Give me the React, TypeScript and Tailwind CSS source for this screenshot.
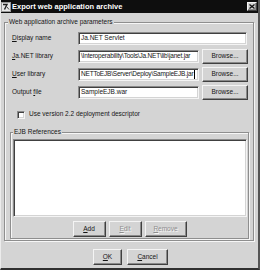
import React from "react";

const sunken =
  "border border-t-[#8a8a8a] border-l-[#8a8a8a] border-r-[#f4f4f4] border-b-[#f4f4f4] shadow-[inset_1px_1px_0_#404040,inset_-1px_-1px_0_#d4d4d4]";
const raised =
  "border border-t-[#f4f4f4] border-l-[#f4f4f4] border-r-[#404040] border-b-[#404040] shadow-[inset_-1px_-1px_0_#8a8a8a]";
const etched =
  "border border-[#8e8e8e] shadow-[1px_1px_0_#f6f6f6,inset_1px_1px_0_#f6f6f6]";

function Btn({
  w,
  h,
  children,
  disabled,
}: {
  w: string;
  h: string;
  children: React.ReactNode;
  disabled?: boolean;
}) {
  return (
    <div
      className={`${w} ${h} ${raised} bg-[#d4d4d4] flex items-center justify-center ${
        disabled ? "text-[#8e8e8e] [text-shadow:1px_1px_0_#f6f6f6]" : "text-[#141414]"
      }`}
    >
      {children}
    </div>
  );
}

function Field({
  text,
  w,
  tight,
  caret,
}: {
  text: string;
  w: string;
  tight?: boolean;
  caret?: boolean;
}) {
  return (
    <div
      className={`${w} h-[13px] ${sunken} bg-white flex items-center overflow-hidden whitespace-nowrap pl-[2px] pr-[1px] ${
        tight ? "tracking-[-0.2px] pl-[1px]" : ""
      }`}
    >
      <span className="shrink-0">{text}</span>
      {caret && <span className="shrink-0 w-px h-[9px] bg-black ml-px" />}
    </div>
  );
}

function Row({
  label,
  children,
}: {
  label: React.ReactNode;
  children: React.ReactNode;
}) {
  return (
    <div className="flex items-center h-[13px]">
      <div className="w-[66px] shrink-0">{label}</div>
      {children}
    </div>
  );
}

export default function App() {
  return (
    <div
      className="w-[260px] h-[270px] bg-[#d4d4d4] flex flex-col text-[6.5px] leading-none text-[#141414] border-l border-l-[#ececec] border-r-2 border-r-[#555] border-b-2 border-b-[#303030] overflow-hidden"
      style={{ fontFamily: '"Liberation Sans", Arial, sans-serif' }}
    >
      {/* Title bar */}
      <div className="h-[13px] shrink-0 bg-[#0e0e0e] flex items-center pl-[1px] pr-[1px] -ml-px">
        <svg width="10" height="10" viewBox="0 0 10 10" className="shrink-0">
          <rect x="0.5" y="0.5" width="9" height="9" fill="#e8e8e8" stroke="#9a9a9a" />
          <path d="M2 2.5h4l-2.5 5" stroke="#222" strokeWidth="1.4" fill="none" />
          <path d="M6 5l2 2.5" stroke="#444" strokeWidth="1" fill="none" />
        </svg>
        <span className="ml-[1px] text-white font-bold text-[7.5px]">
          Export web application archive
        </span>
        <div className="flex-1" />
        <div
          className={`w-[10px] h-[9px] ${raised} bg-[#d4d4d4] flex items-center justify-center`}
        >
          <svg width="6" height="5" viewBox="0 0 6 5">
            <path d="M0.5 0.5l5 4M5.5 0.5l-5 4" stroke="#111" strokeWidth="1.3" />
          </svg>
        </div>
      </div>

      {/* Body */}
      <div className="flex flex-col pl-[3px]">
        {/* Outer group */}
        <div className={`relative mt-[9px] w-[250px] h-[219px] ${etched} flex flex-col pl-[7px] pt-[9px]`}>
          <span className="absolute -top-[4px] left-[3px] bg-[#d4d4d4] px-[1px]">
            Web application archive parameters
          </span>

          <div className="flex flex-col gap-[5px]">
            <Row
              label={
                <span>
                  <u className="underline-offset-[1px]">D</u>isplay name
                </span>
              }
            >
              <Field text="Ja.NET Servlet" w="w-[169px]" />
            </Row>
            <Row
              label={
                <span>
                  <u className="underline-offset-[1px]">J</u>a.NET library
                </span>
              }
            >
              <Field text="\Interoperability\Tools\Ja.NET\lib\janet.jar" w="w-[121px]" tight />
              <div className="ml-[3px]">
                <Btn w="w-[46px]" h="h-[15px]">
                  Browse...
                </Btn>
              </div>
            </Row>
            <Row
              label={
                <span>
                  <u className="underline-offset-[1px]">U</u>ser library
                </span>
              }
            >
              <Field text="NETToEJB\Server\Deploy\SampleEJB.jar" w="w-[121px]" tight caret />
              <div className="ml-[3px]">
                <Btn w="w-[46px]" h="h-[15px]">
                  Browse...
                </Btn>
              </div>
            </Row>
            <Row
              label={
                <span>
                  Output <u className="underline-offset-[1px]">f</u>ile
                </span>
              }
            >
              <Field text="SampleEJB.war" w="w-[121px]" />
              <div className="ml-[3px]">
                <Btn w="w-[46px]" h="h-[15px]">
                  Browse...
                </Btn>
              </div>
            </Row>
          </div>

          {/* Checkbox */}
          <div className="flex items-center mt-[11px] ml-[5px] h-[9px]">
            <div className={`w-[8px] h-[8px] ${sunken} bg-white`} />
            <span className="ml-[4px]">Use version 2.2 deployment descriptor</span>
          </div>

          {/* EJB group */}
          <div
            className={`relative mt-[13px] -ml-[2px] w-[239px] h-[107px] ${etched} flex flex-col pl-[2px] pt-[6px]`}
          >
            <span className="absolute -top-[4px] left-[2px] bg-[#d4d4d4] px-[1px]">
              EJB References
            </span>
            <div className={`w-[234px] h-[78px] ${sunken} bg-white`} />
            <div className="flex justify-center gap-[3px] mt-[4px] pr-[2px]">
              <Btn w="w-[33px]" h="h-[16px]">
                <span>
                  <u className="underline-offset-[1px]">A</u>dd
                </span>
              </Btn>
              <Btn w="w-[33px]" h="h-[16px]" disabled>
                <span>
                  <u className="underline-offset-[1px]">E</u>dit
                </span>
              </Btn>
              <Btn w="w-[42px]" h="h-[16px]" disabled>
                <span>
                  <u className="underline-offset-[1px]">R</u>emove
                </span>
              </Btn>
            </div>
          </div>
        </div>

        {/* Bottom buttons */}
        <div className="flex justify-center gap-[5px] mt-[8px] w-[253px]">
          <Btn w="w-[29px]" h="h-[16px]">
            <span>
              <u className="underline-offset-[1px]">O</u>K
            </span>
          </Btn>
          <Btn w="w-[41px]" h="h-[16px]">
            <span>
              <u className="underline-offset-[1px]">C</u>ancel
            </span>
          </Btn>
        </div>
      </div>
    </div>
  );
}
